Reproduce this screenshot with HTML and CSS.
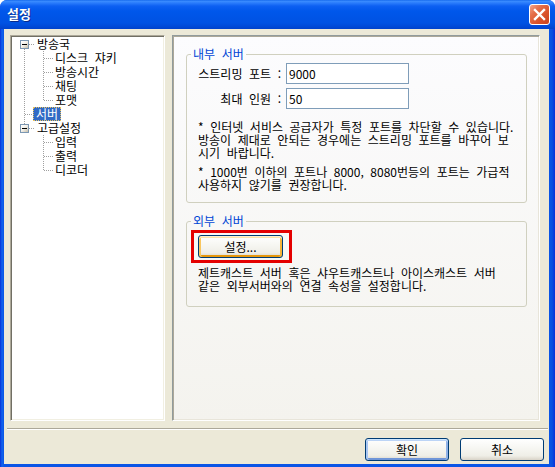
FILE: index.html
```html
<!DOCTYPE html>
<html lang="ko">
<head>
<meta charset="utf-8">
<title>설정</title>
<link rel="stylesheet" href="styles.css">
</head>
<body>
<div class="window">
  <div class="titlebar">
    <span class="title">설정</span>
    <button class="close" aria-label="닫기">
      <svg width="19" height="19" viewBox="0 0 19 19"><path d="M5 5 L14 14 M14 5 L5 14" stroke="#fff" stroke-width="2.4" stroke-linecap="square"/></svg>
    </button>
  </div>
  <div class="client">
    <div class="main">
      <div class="tree">
        <div class="tree-inner">
          <svg class="connectors" width="60" height="140" viewBox="0 0 60 140">
            <g stroke="#a0a0a0" stroke-width="1" stroke-dasharray="1 1" fill="none" shape-rendering="crispEdges">
              <path d="M12.5 12 V87"/>
              <path d="M17 7.5 H22"/>
              <path d="M17 91.5 H22"/>
              <path d="M13 77.5 H21"/>
              <path d="M31.5 14 V64"/>
              <path d="M32 21.5 H41 M32 35.5 H41 M32 49.5 H41 M32 63.5 H41"/>
              <path d="M31.5 98 V134"/>
              <path d="M32 105.5 H41 M32 119.5 H41 M32 133.5 H41"/>
            </g>
          </svg>
          <div class="row root"><span class="box"></span><span>방송국</span></div>
          <div class="row child">디스크 쟈키</div>
          <div class="row child">방송시간</div>
          <div class="row child">채팅</div>
          <div class="row child">포맷</div>
          <div class="row leaf"><span class="selected">서버</span></div>
          <div class="row root"><span class="box"></span><span>고급설정</span></div>
          <div class="row child">입력</div>
          <div class="row child">출력</div>
          <div class="row child">디코더</div>
        </div>
      </div>
      <div class="page">
        <fieldset class="group g1">
          <legend>내부 서버</legend>
          <div class="form">
            <label class="lbl" for="port">스트리밍 포트 :</label>
            <input class="field" id="port" type="text" value="9000">
            <label class="lbl" for="max">최대 인원 :</label>
            <input class="field" id="max" type="text" value="50">
          </div>
          <p class="note n1">* 인터넷 서비스 공급자가 특정 포트를 차단할 수 있습니다.<br>방송이 제대로 안되는 경우에는 스트리밍 포트를 바꾸어 보<br>시기 바랍니다.</p>
          <p class="note n2">* 1000번 이하의 포트나 8000, 8080번등의 포트는 가급적<br>사용하지 않기를 권장합니다.</p>
        </fieldset>
        <fieldset class="group g2">
          <legend>외부 서버</legend>
          <div class="mark"><button class="btn hot">설정...</button></div>
          <p class="note desc">제트캐스트 서버 혹은 샤우트캐스트나 아이스캐스트 서버<br>같은 외부서버와의 연결 속성을 설정합니다.</p>
        </fieldset>
      </div>
    </div>
    <div class="sep"></div>
    <div class="actions">
      <button class="btn default">확인</button>
      <button class="btn">취소</button>
    </div>
  </div>
</div>
</body>
</html>
```
FILE: styles.css
```css
* { box-sizing: border-box; }
html, body { margin: 0; padding: 0; background: #ffffff; }
body { font-family: "Noto Sans CJK KR", "Noto Sans", sans-serif; font-size: 12px; color: #000; word-spacing: 3.2px; }

.window {
  width: 555px;
  height: 467px;
  display: flex;
  flex-direction: column;
  background: linear-gradient(to right, #0831d9 0, #1164ee 2px, #0a55e6 4px, #0a55e6 calc(100% - 6px), #0a50e0 calc(100% - 3px), #0831d9 100%);
  border-radius: 7px 7px 0 0;
  overflow: hidden;
}

.titlebar {
  height: 29px;
  flex: none;
  display: flex;
  align-items: center;
  justify-content: space-between;
  padding: 0 5px 1px 7px;
  background: linear-gradient(to bottom, #0a5fe8 0, #3d8eff 1px, #2a7cfc 3px, #0d60f2 6px, #0057eb 11px, #0054e6 18px, #0052e3 23px, #004bd9 26px, #0042cc 29px);
}
.title {
  color: #fff;
  font-weight: bold;
  font-size: 13px;
  line-height: 16px;
  text-shadow: 1px 1px 0 #0a2a8a;
}
.close {
  width: 21px;
  height: 21px;
  padding: 0;
  margin-top: 1px;
  border: 1px solid #fff;
  border-radius: 3px;
  background: linear-gradient(135deg, #f4a58c 0%, #e5704b 30%, #d9522a 65%, #c9431e 100%);
  display: flex;
  align-items: center;
  justify-content: center;
}

.client {
  flex: 1;
  margin: 0 6px 3px 4px;
  background: #ece9d8;
  display: flex;
  flex-direction: column;
}

.main {
  display: flex;
  gap: 7px;
  padding: 6px 9px 0 6px;
  height: 392px;
  flex: none;
}

.tree {
  width: 155px;
  height: 386px;
  background: #fff;
  border: 1px solid;
  border-color: #aca899 #fff #fff #aca899;
  box-shadow: inset 1px 1px 0 #716f64, inset -1px -1px 0 #f1efe2;
  padding: 1px;
}
.tree-inner { position: relative; }
.connectors { position: absolute; left: 0; top: 0; }
.row {
  height: 14px;
  display: flex;
  align-items: center;
  line-height: 14px;
  white-space: nowrap;
  position: relative;
}
.row.root { padding-left: 8px; gap: 8px; }
.row.child { padding-left: 43px; }
.row.leaf { padding-left: 21px; }
.box {
  width: 9px;
  height: 9px;
  border: 1px solid #7b97b3;
  background: linear-gradient(135deg, #ffffff 0%, #f4f2ec 45%, #c8c0ab 100%);
  position: relative;
  flex: none;
}
.box::after {
  content: "";
  position: absolute;
  left: 1px;
  top: 3px;
  width: 5px;
  height: 1px;
  background: #000;
}
.selected {
  background: #316ac5;
  color: #fff;
  border: 1px dotted #e6c060;
  padding: 0 2px;
  line-height: 12px;
}

.page {
  flex: 1;
  height: 386px;
  border: 1px solid;
  border-color: #919b9c #fff #fff #919b9c;
  box-shadow: inset 1px 1px 0 #aca899, inset -1px -1px 0 #e8e5da;
  background: linear-gradient(to bottom, #fcfcfe, #f4f3ee);
  padding: 11px 12px 0 13px;
}

.group {
  margin: 0;
  border: 1px solid #d0d0bf;
  border-radius: 3px;
  min-inline-size: 0;
  padding: 0 10px 11px 11px;
}
.group legend {
  color: #0046d5;
  line-height: 14px;
  padding: 0 2px;
  margin-left: -7px;
}
.g2 { margin-top: 11px; padding-bottom: 14px; }

.form {
  margin-top: 2px;
  display: grid;
  grid-template-columns: 83px 123px;
  column-gap: 5px;
  row-gap: 4px;
  align-items: center;
}
.lbl { text-align: right; white-space: nowrap; line-height: 14px; }
.field {
  width: 123px;
  height: 21px;
  border: 1px solid #7f9db9;
  background: #fff;
  padding: 0 2px;
  font-family: "Noto Sans CJK KR", "Noto Sans", sans-serif;
  font-size: 12px;
  color: #000;
  outline: none;
}

.note {
  margin: 0;
  line-height: 13px;
  white-space: nowrap;
}
.n1 { margin-top: 11px; }
.n2 { margin-top: 6px; }
.desc { margin-top: 3px; line-height: 13px; }

.mark {
  margin-top: 2px;
  margin-left: -7px;
  width: 101px;
  border: 3px solid #e40000;
  padding: 2px 6px 2px 4px;
}

.btn {
  width: 85px;
  height: 23px;
  padding: 0;
  border: 1px solid #003c74;
  border-radius: 3px;
  background: linear-gradient(to bottom, #ffffff 0%, #f7f7f3 40%, #efeee7 80%, #d8d3c7 100%);
  font-family: "Noto Sans CJK KR", "Noto Sans", sans-serif;
  font-size: 12px;
  line-height: 14px;
  word-spacing: 3.2px;
  color: #000;
  display: block;
}
.btn.hot {
  box-shadow: inset 0 1px 0 #fff0cf, inset 0 2px 0 #fde5a8, inset 2px 0 0 #f9c65e, inset -2px 0 0 #f5b33a, inset 0 -2px 0 #e5970c;
}
.btn.default {
  box-shadow: inset 0 1px 0 #cee7ff, inset 0 2px 0 #bcd4f6, inset 2px 0 0 #a9c6f2, inset -2px 0 0 #8fb1e6, inset 0 -2px 0 #6f95d8;
}

.sep {
  margin: 7px 1px 0 3px;
  height: 2px;
  border-top: 1px solid #aca899;
  border-bottom: 1px solid #fff;
  flex: none;
}

.actions {
  display: flex;
  justify-content: flex-end;
  gap: 11px;
  margin-top: 8px;
  padding-right: 5px;
}
.actions .btn { width: 84px; }
```
